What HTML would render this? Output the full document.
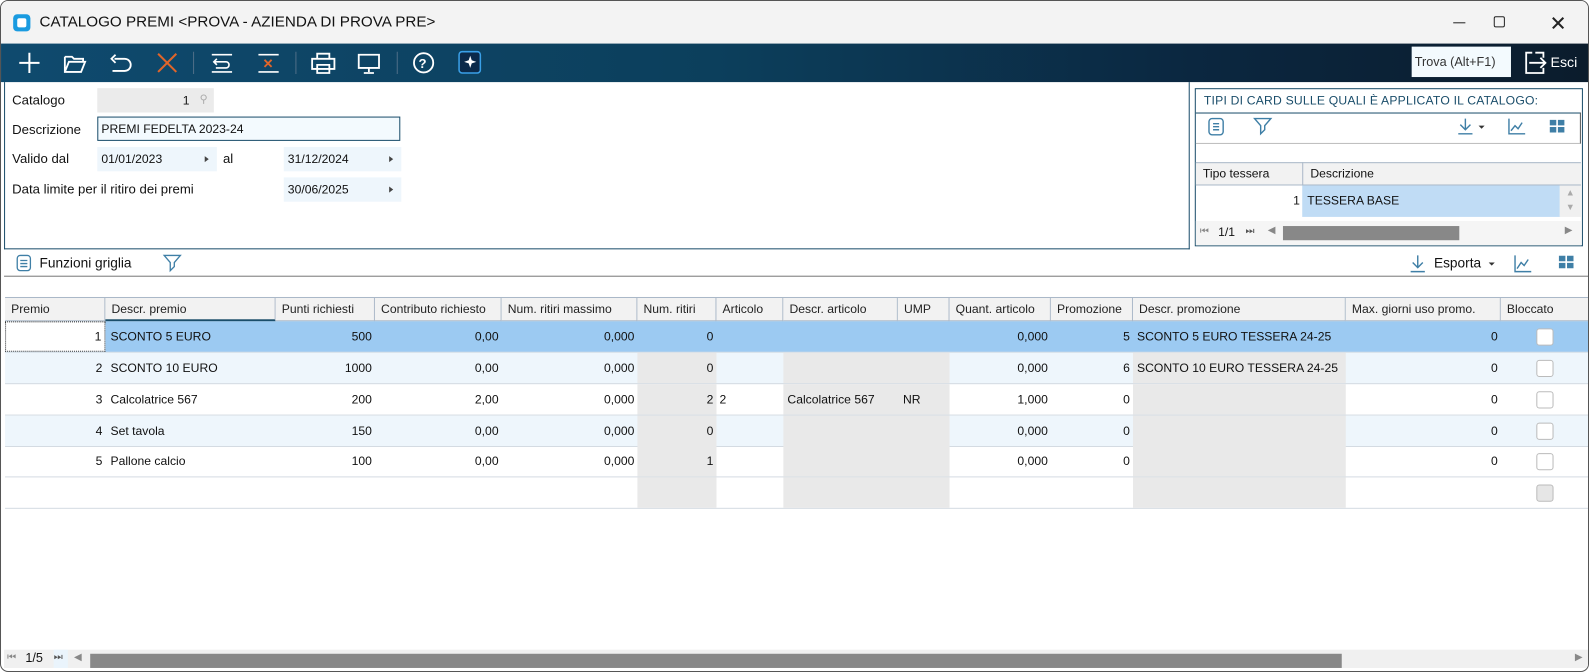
<!DOCTYPE html>
<html><head><meta charset="utf-8"><style>
*{box-sizing:border-box;margin:0;padding:0}
body{width:1589px;height:672px;overflow:hidden;background:#fff;font-family:"Liberation Sans",sans-serif;font-size:12px;color:#111;position:relative}
.a{position:absolute}
.win{left:0;top:0;width:1568px;height:663px;border:1px solid #555;border-radius:8px;overflow:hidden;background:#fff;transform:scale(1.0134,1.0136);transform-origin:0 0}
.title{left:0;top:0;width:1568px;height:42px;background:#f3f3f3}
.tb{left:0;top:42px;width:1568px;height:38px;background:linear-gradient(90deg,#0f4a6e 0%,#0c3f5c 45%,#0b2740 75%,#0b1c2c 100%)}
.lbl{font-size:13.5px;color:#111}
.fld{background:#eef6fc;height:24px;font-size:12.5px;line-height:24px;padding-left:4px}
.tri{position:absolute;right:8px;top:9px;width:0;height:0;border-left:4px solid #444;border-top:3px solid transparent;border-bottom:3px solid transparent}
.hd{position:absolute;top:293px;height:23px;background:#f2f2f2;border-right:1px solid #aab8c8;border-bottom:1px solid #aab8c8;font-size:12px;line-height:22px;padding-left:6px;color:#222;white-space:nowrap;overflow:hidden}
.row{position:absolute;left:4px;width:1562px;height:31px;border-bottom:1px solid #d4dbe2}
.c{position:absolute;height:30px;line-height:30px;font-size:12px;white-space:nowrap}
.r{text-align:right;padding-right:3px}
.g{background:#e9e9e9}
.cb{position:absolute;left:1511px;width:17px;height:17px;border:1px solid #bbb;border-radius:3px;background:#fff;top:7px}
</style></head><body>
<div class="a win">
<div class="a title">
 <div class="a" style="left:12px;top:13px;width:17px;height:17px;background:#1a9be0;border-radius:4px"><div class="a" style="left:4px;top:4px;width:9px;height:9px;background:#fff;border-radius:2px"></div></div>
 <div class="a" style="left:38px;top:12px;font-size:15px;color:#111">CATALOGO PREMI &lt;PROVA - AZIENDA DI PROVA PRE&gt;</div>
 <div class="a" style="left:1433px;top:21px;width:12px;height:1px;background:#222"></div>
 <div class="a" style="left:1473px;top:15px;width:11px;height:11px;border:1px solid #222;border-radius:2px"></div>
 <div class="a" style="left:1528px;top:10px;font-size:20px;color:#222">✕</div>
</div>
<div class="a tb">
 <svg class="a" style="left:0;top:0" width="500" height="38" fill="none" stroke="#fff" stroke-width="2">
  <path d="M28 9v20M18 19h20"/>
  <path d="M63 13h7l2 2h9v3M63 13v15h16l4-10H67l-4 10" stroke-width="1.8"/>
  <path d="M112 15h10a6 6 0 0 1 0 12h-12M113 11l-4 4 4 4" stroke-width="1.8"/>
  <path d="M155 10l18 18M173 10l-18 18" stroke="#e0652a"/>
  <path d="M190 8v22M291 8v22M391 8v22" stroke="#4f6f88" stroke-width="1"/>
  <path d="M208 11h20M210 18h12a3 3 0 0 1 0 6h-10M213 15l-3 3 3 3M208 28h20" stroke-width="1.6"/>
  <path d="M254 11h20M254 28h20" stroke-width="1.6"/><path d="M260 16l7 7M267 16l-7 7" stroke="#e0652a" stroke-width="1.8"/>
  <path d="M312 15v-5h12v5M307 15h22v10h-22zM312 21h12v8h-12z" stroke-width="1.8"/>
  <path d="M353 11h20v13h-20zM363 24v4M358 29h10" stroke-width="1.8"/>
  <circle cx="417" cy="19" r="9.5" stroke-width="1.8"/><text x="412" y="24" fill="#fff" stroke="none" font-size="13" font-family="Liberation Sans" font-weight="bold">?</text>
  <rect x="452" y="8" width="21" height="21" rx="3" fill="#0b2a4a" stroke="#3aa0e8" stroke-width="1.5"/><path d="M463 12l1.5 4.5 4.5 1.5-4.5 1.5-1.5 4.5-1.5-4.5-4.5-1.5 4.5-1.5z" fill="#fff" stroke="none"/>
 </svg>
 <div class="a" style="left:1392px;top:3px;width:98px;height:30px;background:#f3fafe;font-size:12.5px;line-height:30px;padding-left:3px;color:#333">Trova (Alt+F1)</div>
 <svg class="a" style="left:1502px;top:6px" width="26" height="26" fill="none" stroke="#fff" stroke-width="1.8"><path d="M9 3H3v20h17V18M20 8V3h-8M6 13h16M17 8l5 5-5 5"/></svg>
 <div class="a" style="left:1529px;top:10px;font-size:14px;color:#fff">Esci</div>
</div>
<!-- form -->
<div class="a" style="left:3px;top:80px;width:1170px;height:165px;border:1px solid #1a4d6a;border-top:none"></div>
<div class="a lbl" style="left:11px;top:90px;font-size:13px">Catalogo</div>
<div class="a" style="left:95px;top:86px;width:115px;height:24px;background:#ebebeb;text-align:right;line-height:24px;padding-right:24px">1</div>
<div class="a" style="left:196px;top:90px;font-size:11px;color:#aaa">⚲</div>
<div class="a lbl" style="left:11px;top:119px;font-size:13px">Descrizione</div>
<div class="a" style="left:95px;top:114px;width:299px;height:24px;border:1px solid #1a4d6a;background:#f3fafe;line-height:22px;padding-left:3px">PREMI FEDELTA 2023-24</div>
<div class="a lbl" style="left:11px;top:148px;font-size:13px">Valido dal</div>
<div class="a fld" style="left:95px;top:144px;width:118px;font-size:12px">01/01/2023<span class="tri"></span></div>
<div class="a lbl" style="left:219px;top:148px;font-size:13px">al</div>
<div class="a fld" style="left:279px;top:144px;width:116px;font-size:12px">31/12/2024<span class="tri"></span></div>
<div class="a lbl" style="left:11px;top:178px;font-size:13px">Data limite per il ritiro dei premi</div>
<div class="a fld" style="left:279px;top:174px;width:116px;font-size:12px">30/06/2025<span class="tri"></span></div>
<!-- right panel -->
<div class="a" style="left:1178px;top:86px;width:383px;height:156px;border:1px solid #1a4d6a"></div>
<div class="a" style="left:1187px;top:91px;font-size:12px;color:#1a4d6a;letter-spacing:.2px">TIPI DI CARD SULLE QUALI È APPLICATO IL CATALOGO:</div>
<div class="a" style="left:1179px;top:110px;width:380px;height:1px;background:#1a4d6a"></div>
<div class="a" style="left:1179px;top:110px;width:380px;height:31px;border-right:1px solid #555;border-bottom:1px solid #bbb"></div>
<svg class="a" style="left:1190px;top:113px" width="370" height="24" fill="none" stroke="#3f7fa6" stroke-width="1.4">
 <rect x="2" y="3" width="14" height="16" rx="3"/><path d="M6 8h6M6 11h6M6 14h6"/>
 <path d="M47 3h16l-6 7v4l-4 4v-8z"/>
 <path d="M255 3v11M250 9l5 5 5-5M248 18h14"/><path d="M268 10l3 3 3-3z" fill="#333" stroke="none"/>
 <path d="M298 3v15h16M300 15l4-5 3 3 4-6"/>
 <path d="M339 5h5v4h-5zM347 5h5v4h-5zM339 12h5v4h-5zM347 12h5v4h-5z" fill="#3f7fa6"/>
</svg>
<div class="a" style="left:1179px;top:159px;width:380px;height:23px;background:#f2f2f2;border-top:1px solid #aab8c8;border-bottom:1px solid #aab8c8"></div>
<div class="a" style="left:1186px;top:163px">Tipo tessera</div>
<div class="a" style="left:1284px;top:159px;width:1px;height:23px;background:#aab8c8"></div>
<div class="a" style="left:1292px;top:163px">Descrizione</div>
<div class="a" style="left:1284px;top:182px;width:255px;height:31px;background:#c0dcf5"></div>
<div class="a" style="left:1275px;top:190px">1</div>
<div class="a" style="left:1289px;top:190px">TESSERA BASE</div>
<div class="a" style="left:1538px;top:182px;width:21px;height:31px;background:#f0f0f0;color:#aaa;font-size:9px;text-align:center;line-height:14px">▲<br>▼</div>
<div class="a" style="left:1179px;top:217px;width:380px;height:24px;background:#f5f5f5"></div>
<div class="a" style="left:1183px;top:222px;font-size:10px;color:#888">⏮</div>
<div class="a" style="left:1201px;top:221px">1/1</div>
<div class="a" style="left:1228px;top:222px;font-size:10px;color:#555">⏭</div>
<div class="a" style="left:1250px;top:221px;font-size:10px;color:#888">◀</div>
<div class="a" style="left:1265px;top:222px;width:174px;height:14px;background:#888"></div>
<div class="a" style="left:1543px;top:221px;font-size:10px;color:#888">▶</div>
<!-- grid toolbar -->
<div class="a" style="left:3px;top:271px;width:1563px;height:1px;background:#777"></div>
<svg class="a" style="left:14px;top:249px" width="170" height="20" fill="none" stroke="#3f7fa6" stroke-width="1.3">
 <rect x="2" y="2" width="13" height="15" rx="3"/><path d="M5 7h7M5 10h7M5 13h7"/>
 <path d="M147 2h16l-6 7v4l-4 4v-8z"/>
</svg>
<div class="a" style="left:38px;top:251px;font-size:13.5px">Funzioni griglia</div>
<svg class="a" style="left:1388px;top:247px" width="180" height="22" fill="none" stroke="#3f7fa6" stroke-width="1.4">
 <path d="M10 4v12M5 11l5 5 5-5M3 20h14"/><path d="M80 11l3 3 3-3z" fill="#333" stroke="none"/>
 <path d="M106 4v16h16M108 17l4-6 3 3 4-6"/>
 <path d="M150 5h5v4h-5zM158 5h5v4h-5zM150 12h5v4h-5zM158 12h5v4h-5z" fill="#3f7fa6"/>
</svg>
<div class="a" style="left:1414px;top:251px;font-size:13.5px">Esporta</div>
<!-- grid -->
<div class="a" style="left:4px;top:292px;width:1562px;height:1px;background:#aab8c8"></div>
<div class="hd" style="left:4px;width:99px">Premio</div>
<div class="hd" style="left:103px;width:168px;border-bottom:2px solid #1a4d6a">Descr. premio</div>
<div class="hd" style="left:271px;width:98px">Punti richiesti</div>
<div class="hd" style="left:369px;width:125px">Contributo richiesto</div>
<div class="hd" style="left:494px;width:134px">Num. ritiri massimo</div>
<div class="hd" style="left:628px;width:78px">Num. ritiri</div>
<div class="hd" style="left:706px;width:66px">Articolo</div>
<div class="hd" style="left:772px;width:113px">Descr. articolo</div>
<div class="hd" style="left:885px;width:51px">UMP</div>
<div class="hd" style="left:936px;width:100px">Quant. articolo</div>
<div class="hd" style="left:1036px;width:81px">Promozione</div>
<div class="hd" style="left:1117px;width:210px">Descr. promozione</div>
<div class="hd" style="left:1327px;width:153px">Max. giorni uso promo.</div>
<div class="hd" style="left:1480px;width:86px;border-right:none">Bloccato</div>

<div class="row" style="top:316px;background:#9ccaf2">
 <div class="c" style="left:0;width:99px;background:#fff;border:1px dotted #333;text-align:right;padding-right:3px;line-height:28px">1</div>
 <div class="c" style="left:104px">SCONTO 5 EURO</div>
 <div class="c r" style="left:267px;width:98px">500</div><div class="c r" style="left:365px;width:125px">0,00</div><div class="c r" style="left:490px;width:134px">0,000</div>
 <div class="c r" style="left:624px;width:78px">0</div><div class="c r" style="left:932px;width:100px">0,000</div><div class="c r" style="left:1032px;width:81px">5</div>
 <div class="c" style="left:1117px">SCONTO 5 EURO TESSERA 24-25</div><div class="c r" style="left:1323px;width:153px">0</div><div class="cb"></div>
</div>
<div class="row" style="top:347px;background:#eef6fc">
 <div class="c g" style="left:624px;width:78px"></div><div class="c g" style="left:768px;width:164px"></div><div class="c g" style="left:1113px;width:210px"></div>
 <div class="c r" style="left:0;width:99px">2</div><div class="c" style="left:104px">SCONTO 10 EURO</div>
 <div class="c r" style="left:267px;width:98px">1000</div><div class="c r" style="left:365px;width:125px">0,00</div><div class="c r" style="left:490px;width:134px">0,000</div>
 <div class="c r" style="left:624px;width:78px">0</div><div class="c r" style="left:932px;width:100px">0,000</div><div class="c r" style="left:1032px;width:81px">6</div>
 <div class="c" style="left:1117px">SCONTO 10 EURO TESSERA 24-25</div><div class="c r" style="left:1323px;width:153px">0</div><div class="cb"></div>
</div>
<div class="row" style="top:378px">
 <div class="c g" style="left:624px;width:78px"></div><div class="c g" style="left:768px;width:164px"></div><div class="c g" style="left:1113px;width:210px"></div>
 <div class="c r" style="left:0;width:99px">3</div><div class="c" style="left:104px">Calcolatrice 567</div>
 <div class="c r" style="left:267px;width:98px">200</div><div class="c r" style="left:365px;width:125px">2,00</div><div class="c r" style="left:490px;width:134px">0,000</div>
 <div class="c r" style="left:624px;width:78px">2</div><div class="c" style="left:705px">2</div><div class="c" style="left:772px">Calcolatrice 567</div><div class="c" style="left:886px">NR</div>
 <div class="c r" style="left:932px;width:100px">1,000</div><div class="c r" style="left:1032px;width:81px">0</div>
 <div class="c r" style="left:1323px;width:153px">0</div><div class="cb"></div>
</div>
<div class="row" style="top:409px;background:#eef6fc">
 <div class="c g" style="left:624px;width:78px"></div><div class="c g" style="left:768px;width:164px"></div><div class="c g" style="left:1113px;width:210px"></div>
 <div class="c r" style="left:0;width:99px">4</div><div class="c" style="left:104px">Set tavola</div>
 <div class="c r" style="left:267px;width:98px">150</div><div class="c r" style="left:365px;width:125px">0,00</div><div class="c r" style="left:490px;width:134px">0,000</div>
 <div class="c r" style="left:624px;width:78px">0</div><div class="c r" style="left:932px;width:100px">0,000</div><div class="c r" style="left:1032px;width:81px">0</div>
 <div class="c r" style="left:1323px;width:153px">0</div><div class="cb"></div>
</div>
<div class="row" style="top:439px">
 <div class="c g" style="left:624px;width:78px"></div><div class="c g" style="left:768px;width:164px"></div><div class="c g" style="left:1113px;width:210px"></div>
 <div class="c r" style="left:0;width:99px">5</div><div class="c" style="left:104px">Pallone calcio</div>
 <div class="c r" style="left:267px;width:98px">100</div><div class="c r" style="left:365px;width:125px">0,00</div><div class="c r" style="left:490px;width:134px">0,000</div>
 <div class="c r" style="left:624px;width:78px">1</div><div class="c r" style="left:932px;width:100px">0,000</div><div class="c r" style="left:1032px;width:81px">0</div>
 <div class="c r" style="left:1323px;width:153px">0</div><div class="cb"></div>
</div>
<div class="row" style="top:470px">
 <div class="c g" style="left:624px;width:78px"></div><div class="c g" style="left:768px;width:164px"></div><div class="c g" style="left:1113px;width:210px"></div>
 <div class="cb" style="background:#e6e6e6"></div>
</div>
<!-- bottom scroll -->
<div class="a" style="left:3px;top:640px;width:1563px;height:18px;background:#f0f0f0"></div>
<div class="a" style="left:6px;top:642px;font-size:10px;color:#888">⏮</div>
<div class="a" style="left:24px;top:641px;font-size:12.5px">1/5</div>
<div class="a" style="left:52px;top:640px;width:14px;height:18px;background:#eaf4fc;font-size:10px;color:#555;padding-top:2px">⏭</div>
<div class="a" style="left:72px;top:642px;font-size:10px;color:#888">◀</div>
<div class="a" style="left:88px;top:644px;width:1235px;height:14px;background:#888"></div>
<div class="a" style="left:1553px;top:642px;font-size:10px;color:#888">▶</div>
</div>
</body></html>
